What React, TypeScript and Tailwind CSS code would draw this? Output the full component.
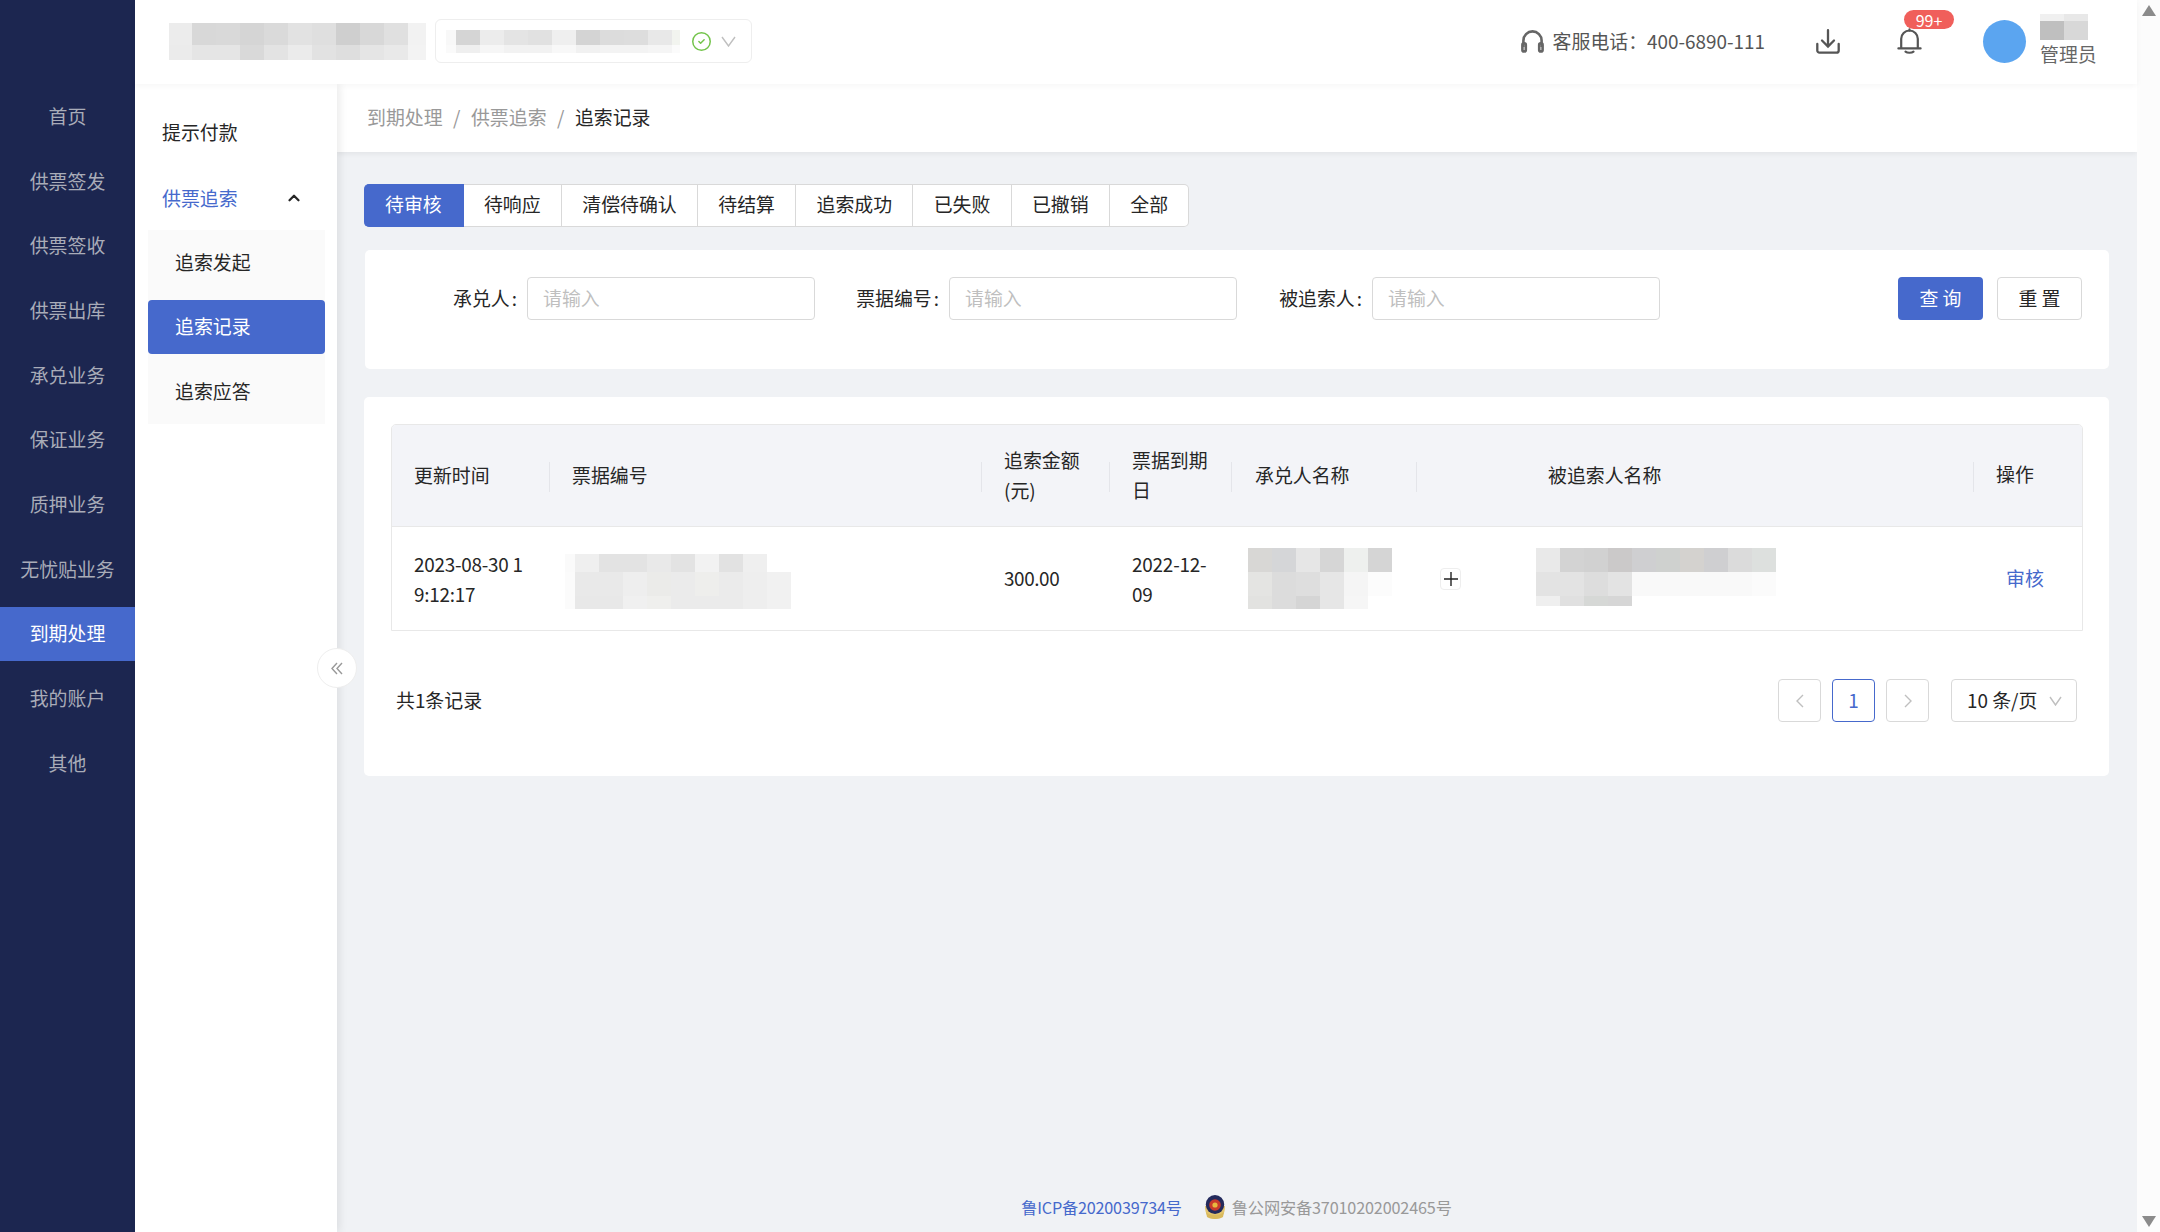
import { ChevronUp, CircleCheck } from "lucide-react";

const primary = "bg-[#4669cc]";

const navItems = ["首页", "供票签发", "供票签收", "供票出库", "承兑业务", "保证业务", "质押业务", "无忧贴业务", "到期处理", "我的账户", "其他"];
const tabs = ["待审核", "待响应", "清偿待确认", "待结算", "追索成功", "已失败", "已撤销", "全部"];

interface MosaicRow {
  height: number;
  cells: string[];
}

// pixelated blocks that stand in for the redacted names
const Mosaic = ({ widths, rows, className }: { widths: number[]; rows: MosaicRow[]; className?: string }) => {
  const totalWidth = widths.reduce((sum, w) => sum + w, 0);
  const totalHeight = rows.reduce((sum, r) => sum + r.height, 0);
  let y = 0;
  return (
    <svg width={totalWidth} height={totalHeight} className={className} shapeRendering="crispEdges">
      {rows.map((row, rowIndex) => {
        const top = y;
        y += row.height;
        let x = 0;
        return row.cells.map((fill, cellIndex) => {
          const left = x;
          x += widths[cellIndex];
          return <rect key={`${rowIndex}-${cellIndex}`} x={left} y={top} width={widths[cellIndex]} height={row.height} fill={fill} />;
        });
      })}
    </svg>
  );
};

const HeadsetIcon = () => (
  <svg width="23" height="24" viewBox="0 0 23 24" fill="none" stroke="#666" strokeWidth="2.6">
    <path d="M2.4 18V11.5a9.1 9.1 0 0 1 18.2 0V18" />
    <rect x="1.4" y="14.4" width="3.4" height="8" rx="1.5" />
    <rect x="18.2" y="14.4" width="3.4" height="8" rx="1.5" />
  </svg>
);

const DownloadIcon = () => (
  <svg width="24" height="25" viewBox="0 0 24 25" fill="none" stroke="#555" strokeWidth="2.3" strokeLinecap="round">
    <path d="M12 1.2v16M6 11.5l6 6 6-6" />
    <path d="M1.3 15v6.4a2.2 2.2 0 0 0 2.2 2.2h17a2.2 2.2 0 0 0 2.2-2.2V15" />
  </svg>
);

const BellIcon = () => (
  <svg width="25" height="26" viewBox="0 0 25 26" fill="none" stroke="#555" strokeWidth="2.2" strokeLinecap="round" strokeLinejoin="round">
    <path d="M12.5 1.4v1.4M4.2 20V10.8a8.3 8.3 0 0 1 16.6 0V20M1.4 20.4h22.2" />
    <path d="M8.5 23.6c1.8 1.5 6.2 1.5 8 0" />
  </svg>
);

const PoliceBadge = () => (
  <svg width="22" height="26" viewBox="0 0 22 26">
    <path d="M1 12c0 8 3 13 10 13s10-5 10-13z" fill="#e3c56e" />
    <ellipse cx="11" cy="10.5" rx="9.2" ry="9.5" fill="#232a5c" />
    <circle cx="11" cy="11" r="5.8" fill="#c93a2c" />
    <circle cx="11" cy="11" r="2.6" fill="#e8b93f" />
    <path d="M2 18c3 4 15 4 18 0l-1 5c-3 2.5-13 2.5-16 0z" fill="#d9b95c" />
  </svg>
);

const Thin = ({ d, w, h, color = "#bfbfbf" }: { d: string; w: number; h: number; color?: string }) => (
  <svg width={w} height={h} viewBox={`0 0 ${w} ${h}`} fill="none" stroke={color} strokeWidth="1.4">
    <path d={d} />
  </svg>
);

const Sidebar = () => (
  <aside className="w-[135px] shrink-0 bg-[#1c2650] pt-[89px]">
    {navItems.map((item) => (
      <div
        key={item}
        className={`mb-[10.7px] flex h-[54px] items-center justify-center ${item === "到期处理" ? `${primary} text-white` : "text-[#a9acb8]"}`}
      >
        {item}
      </div>
    ))}
  </aside>
);

const Header = () => (
  <header className="relative z-20 flex h-[84px] shrink-0 items-center bg-white pb-[2px] pl-[34px] pr-[40px] shadow-[0_2px_6px_rgba(0,0,0,0.04)]">
    <Mosaic
      widths={[23, 24, 24, 24, 24, 24, 24, 24, 24, 24, 18]}
      rows={[
        { height: 22, cells: ["#ececec", "#d8d8d8", "#d9d9d9", "#d5d5d5", "#dadada", "#e2e2e2", "#dfdfdf", "#cfcfcf", "#d8d8d8", "#e0e0e0", "#f2f2f2"] },
        { height: 15, cells: ["#ebebeb", "#e5e5e5", "#e5e5e5", "#d9d9d9", "#e3e3e3", "#ebebeb", "#e2e2e2", "#dedede", "#e5e5e5", "#e9e9e9", "#f3f3f3"] },
      ]}
    />
    <div className="ml-[9px] flex h-[44px] w-[317px] items-center rounded-[6px] border border-[#eeeeee] pl-[10px]">
      <Mosaic
        widths={[10, 24, 24, 24, 24, 24, 24, 24, 24, 24, 8]}
        rows={[
          { height: 15, cells: ["#f8f8f8", "#d5d5d5", "#ececec", "#e4e4e4", "#e1e1e1", "#efefef", "#d4d4d4", "#dcdcdc", "#dddddd", "#e8e8e8", "#f2f4ef"] },
          { height: 8, cells: ["#fafafa", "#efefef", "#f6f6f6", "#f2f2f2", "#f2f2f2", "#f8f8f8", "#f1f1f1", "#f3f3f3", "#f3f3f3", "#f5f5f5", "#fbfbfb"] },
        ]}
      />
      <CircleCheck size={21} strokeWidth={1.7} className="ml-[11px] text-[#73c44b]" />
      <span className="ml-[9px]">
        <Thin w={15} h={11} d="M1 1l6.5 9L14 1" />
      </span>
    </div>

    <div className="ml-auto flex items-center">
      <HeadsetIcon />
      <span className="ml-[9px] text-[#555]">客服电话：400-6890-111</span>
      <span className="ml-[51px]">
        <DownloadIcon />
      </span>
      <div className="relative ml-[57px]">
        <BellIcon />
        <span className="absolute left-[7px] top-[-18px] flex h-[19px] w-[50px] items-center justify-center rounded-full bg-[#f05f5b] text-[16px] text-white">99+</span>
      </div>
      <div className="ml-[61px] h-[43px] w-[43px] rounded-full bg-[#5ba5f0]" />
      <div className="ml-[14px] mt-[-2px] flex w-[57px] flex-col">
        <Mosaic
          widths={[24, 24]}
          rows={[
            { height: 7, cells: ["#f0f0f0", "#e8e8e8"] },
            { height: 19, cells: ["#bfbfbf", "#d8d8d8"] },
          ]}
        />
        <span className="mt-[1px] whitespace-nowrap leading-[26px] text-[#666]">管理员</span>
      </div>
    </div>
  </header>
);

const SubMenu = () => (
  <nav className="relative z-10 w-[202px] shrink-0 bg-white shadow-[3px_0_8px_rgba(0,0,0,0.08)]">
    <div className="mt-[17px] flex h-[64px] items-center pb-[2px] pl-[27px]">提示付款</div>
    <div className="mt-[2px] flex h-[64px] items-center justify-between pb-[2px] pl-[27px] pr-[34px] text-[#4669cc]">
      供票追索
      <ChevronUp size={18} strokeWidth={3} className="text-[#262626]" />
    </div>
    <div className="ml-[13px] mr-[12px] mt-[-1px] bg-[#fafafa] pb-[5px] pt-[6px]">
      <div className="flex h-[54px] items-center pb-[2px] pl-[27px]">追索发起</div>
      <div className={`mt-[10px] flex h-[54px] items-center rounded-[4px] pb-[2px] pl-[27px] text-white ${primary}`}>追索记录</div>
      <div className="mt-[11px] flex h-[54px] items-center pb-[2px] pl-[27px]">追索应答</div>
    </div>
    <button className="absolute left-[182px] top-[564px] flex h-[40px] w-[40px] items-center justify-center rounded-full border border-[#eeeeee] bg-white">
      <Thin w={12} h={13} color="#999999" d="M6 1L1 6.5 6 12M11 1L6 6.5 11 12" />
    </button>
  </nav>
);

const SearchField = ({ label, className = "" }: { label: string; className?: string }) => (
  <div className={`flex items-center ${className}`}>
    <label className="w-[134px] pr-[10px] text-right">{label}<span className="ml-[2px]">:</span></label>
    <div className="flex h-[43px] w-[288px] items-center rounded-[4px] border border-[#d9d9d9] px-[15px] text-[#bfbfbf]">请输入</div>
  </div>
);

const SearchCard = () => (
  <section className="ml-[1px] mt-[23px] flex h-[119px] items-start rounded-[5px] bg-white pl-[28px] pr-[27px] pt-[27px]">
    <SearchField label="承兑人" />
    <SearchField label="票据编号" />
    <SearchField label="被追索人" className="ml-[1px]" />
    <button className={`ml-auto h-[43px] w-[85px] rounded-[4px] text-white ${primary}`}>查 询</button>
    <button className="ml-[14px] h-[43px] w-[85px] rounded-[4px] border border-[#d9d9d9]">重 置</button>
  </section>
);

const headCell = "relative flex items-center pb-[2px] pl-[22px] pr-[10px] leading-[30px] after:absolute after:right-0 after:top-[37px] after:h-[30px] after:w-px after:bg-[#e4e5ea]";
const cols = "grid grid-cols-[158px_432px_128px_122px_185px_109px_448px_1fr]";

const RecordTable = () => (
  <div className="overflow-hidden rounded-t-[5px] border border-[#e8e8e8]">
    <div className={`${cols} h-[102px] border-b border-[#e8e8e8] bg-[#f3f4f8]`}>
      <div className={headCell}>更新时间</div>
      <div className={headCell}>票据编号</div>
      <div className={headCell}>追索金额(元)</div>
      <div className={headCell}>票据到期日</div>
      <div className={`${headCell} pl-[23px]`}>承兑人名称</div>
      <div />
      <div className={headCell}>被追索人名称</div>
      <div className="flex items-center pb-[2px] pl-[22px]">操作</div>
    </div>
    <div className={`${cols} h-[103px]`}>
      <div className="flex items-center break-all pl-[22px] pr-[22px] leading-[30px] tracking-[-0.25px]">2023-08-30 19:12:17</div>
      <div className="flex items-center pl-[15px]">
        <Mosaic
          className="mt-[5px]"
          widths={[10, 24, 24, 24, 24, 24, 24, 24, 24, 24]}
          rows={[
            { height: 18, cells: ["#fafafa", "#efefef", "#e3e3e3", "#e3e3e3", "#e9e9e9", "#e3e3e3", "#f2f2f2", "#e2e2e2", "#efefef", "#ffffff"] },
            { height: 24, cells: ["#fbfbfb", "#e9e9e9", "#e9e9e9", "#eeeeee", "#ebebe9", "#ebebeb", "#eeeeec", "#ebebeb", "#eeeeee", "#f1f1f1"] },
            { height: 13, cells: ["#fbfbfb", "#e8e8e8", "#e8e8e8", "#f0f0f0", "#efefed", "#ebebeb", "#ebebeb", "#ebebeb", "#eeeeee", "#f1f1f1"] },
          ]}
        />
      </div>
      <div className="flex items-center pl-[22px] tracking-[-0.4px]">300.00</div>
      <div className="flex items-center pl-[22px] pr-[10px] leading-[30px] tracking-[-0.2px]">2022-12-09</div>
      <div className="flex items-center pl-[16px]">
        <Mosaic
          widths={[24, 24, 24, 24, 24, 24]}
          rows={[
            { height: 24, cells: ["#d8d7d5", "#d5d6d8", "#e6e6e6", "#d6d6d6", "#eef0ee", "#d5d5d5"] },
            { height: 24, cells: ["#e4e4e2", "#dcdcdc", "#dedede", "#e6e6e6", "#f5f5f5", "#fcfcfc"] },
            { height: 13, cells: ["#e2e2e0", "#dcdcdc", "#d5d5d5", "#e6e6e6", "#f6f6f6", "#ffffff"] },
          ]}
        />
      </div>
      <div className="flex items-center pl-[23px]">
        <span className="flex h-[22px] w-[21px] items-center justify-center rounded-[4px] border border-[#eeeeee]">
          <svg width="14" height="14" viewBox="0 0 14 14" stroke="#222" strokeWidth="1.4">
            <path d="M0 7h14M7 0v14" />
          </svg>
        </span>
      </div>
      <div className="flex items-center pl-[10px]">
        <Mosaic
          className="mb-[4px]"
          widths={[24, 24, 24, 24, 24, 24, 24, 24, 24, 24]}
          rows={[
            { height: 24, cells: ["#e9e9e9", "#d3d3d3", "#d1d1d1", "#cbc9c9", "#cfcfd1", "#cfd1cf", "#d4d2cf", "#cfcfd1", "#dbdbdb", "#dde0de"] },
            { height: 24, cells: ["#e3e3e3", "#e3e3e3", "#dddddd", "#e3e3e3", "#f9f9f9", "#f9f9f9", "#f9f9f9", "#f9f9f9", "#f9f9f9", "#fbfbfb"] },
            { height: 10, cells: ["#efefef", "#e0e0e0", "#d6d8d6", "#d6d6d6", "#ffffff", "#ffffff", "#ffffff", "#ffffff", "#ffffff", "#ffffff"] },
          ]}
        />
      </div>
      <div className="flex items-center pl-[32px] text-[#4669cc]">审核</div>
    </div>
  </div>
);

const pageBox = "flex h-[43px] w-[43px] items-center justify-center rounded-[4px] border";

const Pagination = () => (
  <div className="mt-[48px] flex items-center pl-[5px] pr-[6px]">
    <span>共1条记录</span>
    <div className={`ml-auto border-[#d9d9d9] ${pageBox}`}>
      <Thin w={10} h={14} d="M8 1L2 7l6 6" />
    </div>
    <div className={`ml-[11px] border-[#4669cc] text-[#4669cc] ${pageBox}`}>1</div>
    <div className={`ml-[11px] border-[#d9d9d9] ${pageBox}`}>
      <Thin w={10} h={14} d="M2 1l6 6-6 6" />
    </div>
    <div className="ml-[22px] flex h-[43px] w-[126px] items-center justify-between rounded-[4px] border border-[#d9d9d9] pl-[15px] pr-[14px]">
      10 条/页
      <Thin w={13} h={10} d="M1 1l5.5 8L12 1" />
    </div>
  </div>
);

const Footer = () => (
  <footer className="mt-auto flex items-center justify-center gap-[22px] pb-[12px] text-[16.2px] leading-[26px] text-[#999999]">
    <span className="tracking-[-0.2px] text-[#4669cc]">鲁ICP备2020039734号</span>
    <span className="flex items-center gap-[6px] tracking-[-0.15px]">
      <PoliceBadge />
      鲁公网安备37010202002465号
    </span>
  </footer>
);

const Scrollbar = () => (
  <div className="flex w-[23px] shrink-0 flex-col items-center justify-between bg-[#fcfcfc] pb-[5px] pt-[5px]">
    <svg width="14" height="11" viewBox="0 0 14 11">
      <path d="M7 0l7 11H0z" fill="#8b8b8b" />
    </svg>
    <svg width="14" height="11" viewBox="0 0 14 11">
      <path d="M7 11L0 0h14z" fill="#8b8b8b" />
    </svg>
  </div>
);

export default function App() {
  return (
    <div className="flex h-[1232px] w-[2160px] overflow-hidden bg-white font-['Noto_Sans_CJK_SC',sans-serif] text-[18.9px] text-[#262626]">
      <Sidebar />
      <div className="flex min-w-0 flex-1 flex-col">
        <Header />
        <div className="flex min-h-0 flex-1">
          <SubMenu />
          <main className="flex min-w-0 flex-1 flex-col bg-[#f0f2f5]">
            <div className="flex h-[68px] shrink-0 items-center bg-white pb-[2px] pl-[30px] text-[#999999] shadow-[0_2px_5px_rgba(0,0,0,0.06)]">
              到期处理<span className="mx-[10.5px]">/</span>供票追索<span className="mx-[10.5px]">/</span>
              <span className="text-[#262626]">追索记录</span>
            </div>
            <div className="flex min-h-0 flex-1 flex-col pl-[27px] pr-[28px] pt-[32px]">
              <div className="flex h-[43px]">
                {tabs.map((tab, i) => (
                  <div
                    key={tab}
                    className={`flex items-center border border-l-0 pb-[2px] ${
                      i === 0 ? `rounded-l-[5px] border-[#4669cc] px-[21px] text-white ${primary}` : "border-[#d9d9d9] bg-white px-[20.3px]"
                    } ${i === tabs.length - 1 ? "rounded-r-[5px]" : ""}`}
                  >
                    {tab}
                  </div>
                ))}
              </div>
              <SearchCard />
              <section className="mt-[28px] h-[379px] rounded-[5px] bg-white pl-[27px] pr-[26px] pt-[27px]">
                <RecordTable />
                <Pagination />
              </section>
              <Footer />
            </div>
          </main>
        </div>
      </div>
      <Scrollbar />
    </div>
  );
}
